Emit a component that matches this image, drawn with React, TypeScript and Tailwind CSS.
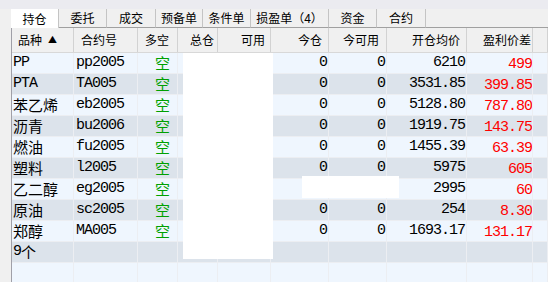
import React from "react"

const tabs = [
  { label: "持仓", w: 48 },
  { label: "委托", w: 48 },
  { label: "成交", w: 49 },
  { label: "预备单", w: 47 },
  { label: "条件单", w: 48 },
  { label: "损盈单（4）", w: 78 },
  { label: "资金", w: 48 },
  { label: "合约", w: 49 },
]

const cols = [
  { w: "w-[62px]", head: "品种", hc: "justify-start pl-[6px]", dc: "justify-start pl-[1px]" },
  { w: "w-[64px]", head: "合约号", hc: "justify-start pl-[7px]", dc: "justify-start pl-[2px]" },
  { w: "w-[40px]", head: "多空", hc: "justify-start pl-[7px]", dc: "justify-start pl-[17px]" },
  { w: "w-[40px]", head: "总仓", hc: "justify-start pl-[12px]", dc: "justify-end pr-[2px]" },
  { w: "w-[53px]", head: "可用", hc: "justify-end pr-[5px]", dc: "justify-end pr-[2px]" },
  { w: "w-[58px]", head: "今仓", hc: "justify-end pr-[6px]", dc: "justify-end pr-[1px]" },
  { w: "w-[58px]", head: "今可用", hc: "justify-end pr-[7px]", dc: "justify-end pr-[1px]" },
  { w: "w-[80px]", head: "开仓均价", hc: "justify-end pr-[6px]", dc: "justify-end pr-[1px]" },
  { w: "w-[66px]", head: "盈利价差", hc: "justify-end pr-[1px]", dc: "justify-end pr-[0px]" },
  { w: "flex-1", head: "", hc: "", dc: "" },
]

const rows = [
  ["PP", "pp2005", "0", "0", "6210", "499"],
  ["PTA", "TA005", "0", "0", "3531.85", "399.85"],
  ["苯乙烯", "eb2005", "0", "0", "5128.80", "787.80"],
  ["沥青", "bu2006", "0", "0", "1919.75", "143.75"],
  ["燃油", "fu2005", "0", "0", "1455.39", "63.39"],
  ["塑料", "l2005", "0", "0", "5975", "605"],
  ["乙二醇", "eg2005", "", "", "2995", "60"],
  ["原油", "sc2005", "0", "0", "254", "8.30"],
  ["郑醇", "MA005", "0", "0", "1693.17", "131.17"],
]

function Mixed({ text }: { text: string }) {
  const parts = text.split(/([\u4e00-\u9fff]+)/).filter(Boolean)
  return (
    <>
      {parts.map((p, i) =>
        /[\u4e00-\u9fff]/.test(p) ? (
          <span key={i} className="font-['Noto_Sans_CJK_SC',sans-serif] text-[15px]">{p}</span>
        ) : (
          <span key={i} className="font-['Liberation_Mono',monospace] text-[15px] tracking-[-1px]">{p}</span>
        )
      )}
    </>
  )
}

function Row({ cells, idx }: { cells: React.ReactNode[]; idx: number }) {
  const bg = idx % 2 === 0 ? "bg-[#eff6fe]" : "bg-[#dce3eb]"
  return (
    <div className={`flex h-[21px] border-b border-[#eceef2] ${bg}`}>
      {cols.map((c, i) => (
        <div
          key={i}
          className={`${c.w} shrink-0 flex items-center border-r border-[#eceef2] overflow-hidden whitespace-nowrap ${c.dc}`}
        >
          {cells[i]}
        </div>
      ))}
    </div>
  )
}

export default function App() {
  const dataRows = rows.map((r) => [
    <Mixed text={r[0]} />,
    <Mixed text={r[1]} />,
    <span className="font-['Noto_Sans_CJK_SC',sans-serif] text-[15px] text-[#00a000]">空</span>,
    null,
    null,
    <Mixed text={r[2]} />,
    <Mixed text={r[3]} />,
    <Mixed text={r[4]} />,
    <span className="text-[#ff0000]"><Mixed text={r[5]} /></span>,
    null,
  ])

  return (
    <div className="relative w-[548px] h-[282px] overflow-hidden bg-[#f0f0f0] text-black">
      <div className="h-[9px] bg-[#ebebf0]" />
      <div className="flex h-[19px] pl-[11px] font-['Noto_Sans_CJK_SC',sans-serif] text-[12px]">
        {tabs.map((t, i) => (
          <div
            key={t.label}
            style={{ width: t.w }}
            className={`flex items-center justify-center border-r border-[#c4c4c4] ${
              i === 0 ? "bg-white" : "bg-[#f0f0f0] border-b border-b-[#a0a0a0]"
            }`}
          >
            {t.label}
          </div>
        ))}
        <div className="flex-1 border-b border-[#a0a0a0]" />
      </div>
      <div className="ml-[11px] border-l border-[#a0a0a8] h-[254px]">
        <div className="flex h-[25px] bg-[#f0f0f0] border-b border-[#d8d8d8] font-['Noto_Sans_CJK_SC',sans-serif] text-[12px]">
          {cols.map((c, i) => (
            <div
              key={i}
              className={`${c.w} shrink-0 flex items-center border-r border-[#d2d2d2] whitespace-nowrap overflow-hidden ${c.hc}`}
            >
              {c.head}
              {i === 0 && <span className="ml-[6px] text-[9px]">▲</span>}
            </div>
          ))}
        </div>
        {dataRows.map((cells, i) => (
          <Row key={i} cells={cells} idx={i} />
        ))}
        <Row idx={9} cells={[<Mixed text="9个" />]} />
        <Row idx={10} cells={[]} />
      </div>
      <div className="absolute left-[183px] top-[53px] w-[90px] h-[206px] bg-white" />
      <div className="absolute left-[302px] top-[176px] w-[97px] h-[22px] bg-white" />
    </div>
  )
}
